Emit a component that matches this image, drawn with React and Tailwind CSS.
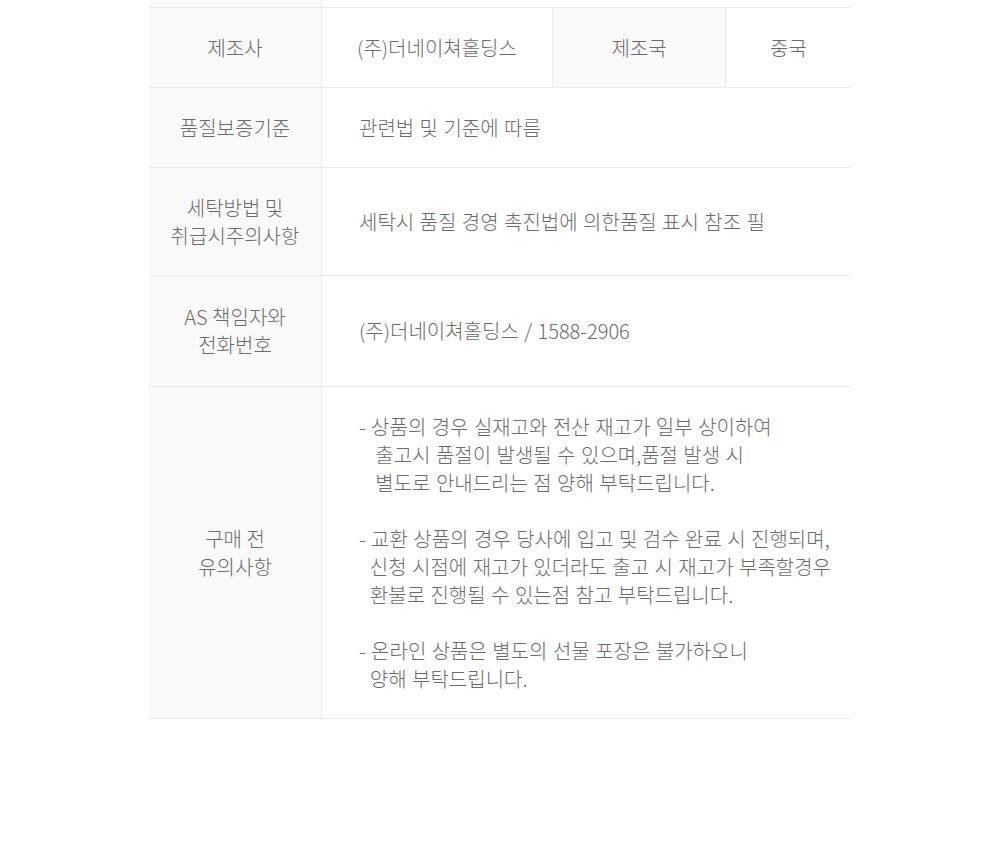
import React from 'react';

const font = { fontFamily: '"Noto Sans CJK KR", "Noto Sans", sans-serif' };

const notice = `- 상품의 경우 실재고와 전산 재고가 일부 상이하여
   출고시 품절이 발생될 수 있으며,품절 발생 시
   별도로 안내드리는 점 양해 부탁드립니다.

- 교환 상품의 경우 당사에 입고 및 검수 완료 시 진행되며,
  신청 시점에 재고가 있더라도 출고 시 재고가 부족할경우
  환불로 진행될 수 있는점 참고 부탁드립니다.

- 온라인 상품은 별도의 선물 포장은 불가하오니
  양해 부탁드립니다.`;

const rows = [
  { label: ['품질보증기준'], value: '관련법 및 기준에 따름', h: 'h-[80px]' },
  { label: ['세탁방법 및', '취급시주의사항'], value: '세탁시 품질 경영 촉진법에 의한품질 표시 참조 필', h: 'h-[108px]' },
  { label: ['AS 책임자와', '전화번호'], value: '(주)더네이쳐홀딩스 / 1588-2906', h: 'h-[111px]' },
  { label: ['구매 전', '유의사항'], value: notice, h: 'h-[332px]', pre: true },
];

function Label({ lines, className = '' }) {
  return (
    <div className={`flex flex-col items-center justify-center bg-[#fafafa] text-center ${className}`}>
      {lines.map((l) => (
        <span key={l}>{l}</span>
      ))}
    </div>
  );
}

export default function App() {
  return (
    <div className="min-h-[851px] bg-white" style={font}>
      <div className="mx-auto w-[702px] text-[20px] font-light leading-[28px] text-[#6b6b6b]">
        {/* tail of the row above */}
        <div className="grid h-[8px] grid-cols-[172px_1fr] border-b border-[#ebebeb]">
          <div className="bg-[#fafafa]" />
          <div className="border-l border-[#ebebeb]" />
        </div>

        <div className="grid h-[80px] grid-cols-[172px_231px_173px_1fr] border-b border-[#ebebeb]">
          <Label lines={['제조사']} />
          <div className="flex items-center justify-center border-l border-[#ebebeb]">(주)더네이쳐홀딩스</div>
          <Label lines={['제조국']} className="border-l border-[#ebebeb]" />
          <div className="flex items-center justify-center border-l border-[#ebebeb]">중국</div>
        </div>

        {rows.map((r) => (
          <div key={r.label[0]} className={`grid grid-cols-[172px_1fr] border-b border-[#ebebeb] ${r.h}`}>
            <Label lines={r.label} />
            <div
              className={`flex items-center border-l border-[#ebebeb] pl-[37px] [word-spacing:1px] ${
                r.pre ? 'whitespace-pre' : ''
              }`}
            >
              {r.value}
            </div>
          </div>
        ))}
      </div>
    </div>
  );
}
